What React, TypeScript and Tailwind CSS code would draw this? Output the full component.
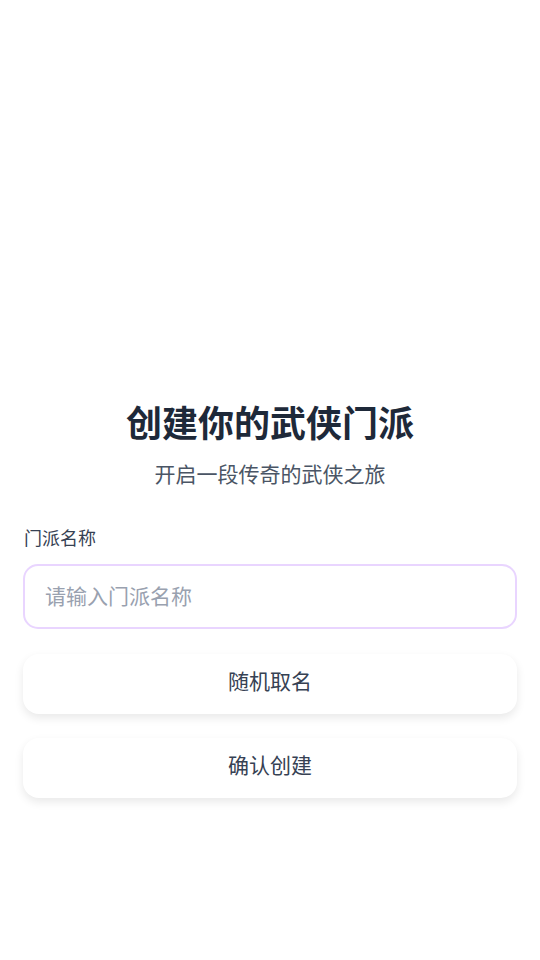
export default function App() {
  return (
    <div
      className="min-h-screen bg-white px-[23px] pt-[399px]"
      style={{ fontFamily: '"Noto Sans CJK SC", "Noto Sans", sans-serif' }}
    >
      <h1 className="text-center text-[36px] leading-[44px] font-bold text-gray-800">
        创建你的武侠门派
      </h1>
      <p className="mt-[15px] text-center text-[21px] leading-[30px] text-gray-600">
        开启一段传奇的武侠之旅
      </p>

      <label className="mt-[36px] block pl-px text-[18px] leading-[26px] text-gray-700">
        门派名称
      </label>
      <input
        type="text"
        placeholder="请输入门派名称"
        className="mt-[14px] block h-[65px] w-full rounded-[15px] border-[2.5px] border-[#e9d5ff] px-[20px] pb-[4px] text-[21px] text-gray-700 outline-none placeholder:text-gray-400"
      />

      <div className="mt-[25px] flex flex-col gap-6">
        <button className="h-[60px] w-full rounded-2xl bg-white pb-[7px] text-[21px] text-gray-700 shadow-[0_4px_10px_rgba(0,0,0,0.09)]">
          随机取名
        </button>
        <button className="h-[60px] w-full rounded-2xl bg-white pb-[7px] text-[21px] text-gray-700 shadow-[0_4px_10px_rgba(0,0,0,0.09)]">
          确认创建
        </button>
      </div>
    </div>
  );
}
